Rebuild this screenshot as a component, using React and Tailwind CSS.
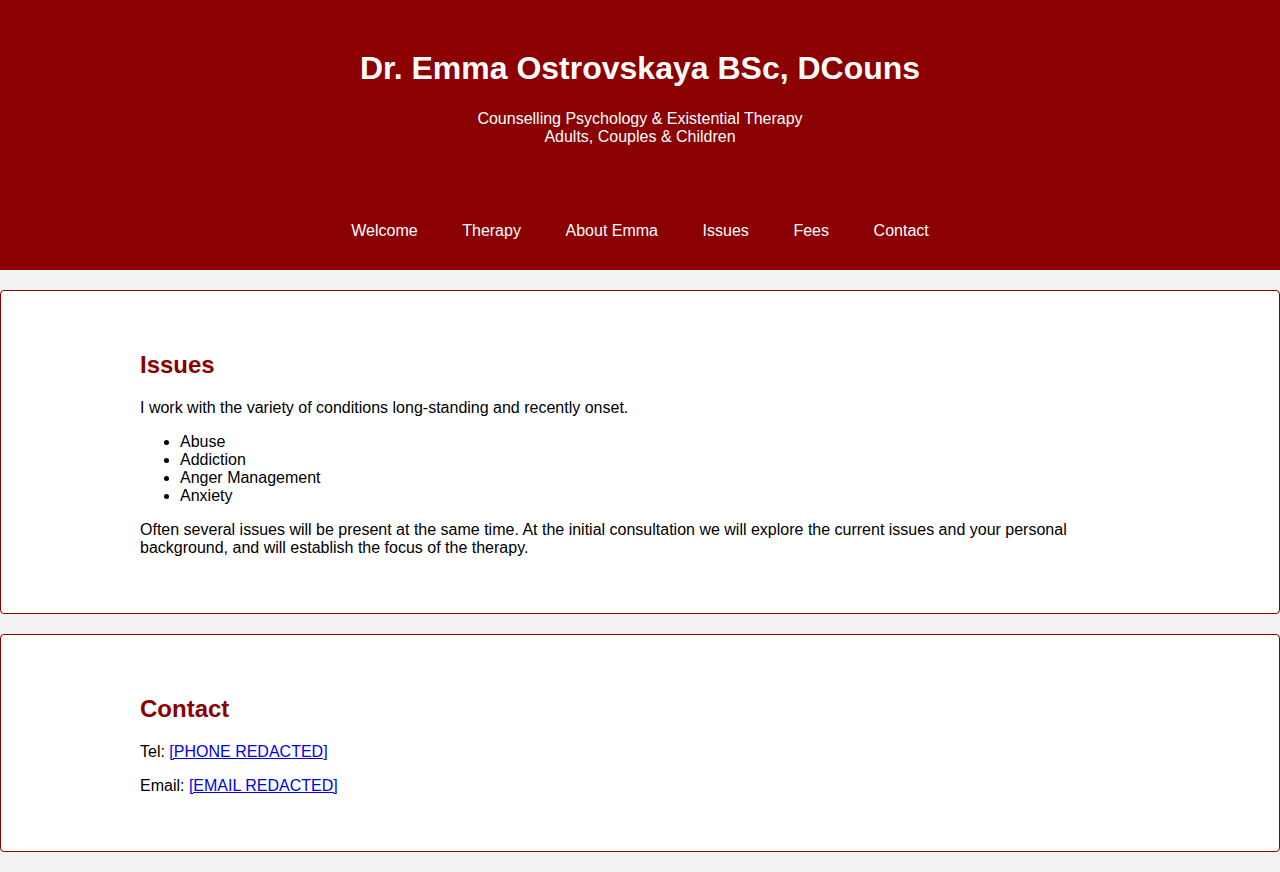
const navItems = ['Welcome', 'Therapy', 'About Emma', 'Issues', 'Fees', 'Contact']

const issues = ['Abuse', 'Addiction', 'Anger Management', 'Anxiety']

function Card({ title, children }) {
  return (
    <section className="mt-[20px] bg-white border border-[#8b0000] rounded-[4px] py-[40px]">
      <div className="w-[1000px] ml-[139px]">
        <h2 className="text-[24px] font-bold text-[#8b0000] leading-[normal] mt-[20px] mb-[20px]">{title}</h2>
        {children}
      </div>
      <div className="h-[16px]" />
    </section>
  )
}

export default function App() {
  return (
    <div className="min-h-[872px] bg-[#f3f3f3] pb-[20px] text-[16px] leading-[normal] text-black font-['Liberation_Sans',Arial,sans-serif]">
      <header className="bg-[#8b0000] text-white text-center pt-[50px] pb-[10px]">
        <h1 className="text-[32px] font-bold leading-[normal] mb-[23px]">Dr. Emma Ostrovskaya BSc, DCouns</h1>
        <p>
          Counselling Psychology &amp; Existential Therapy
          <br />
          Adults, Couples &amp; Children
        </p>
        <nav className="mt-[56px] py-[20px] flex justify-center gap-[44.6px]">
          {navItems.map((item) => (
            <a key={item} href="#" className="text-white">
              {item}
            </a>
          ))}
        </nav>
      </header>

      <Card title="Issues">
        <p className="mb-[16px]">I work with the variety of conditions long-standing and recently onset.</p>
        <ul className="list-disc pl-[40px] mb-[16px]">
          {issues.map((i) => (
            <li key={i}>{i}</li>
          ))}
        </ul>
        <p>
          Often several issues will be present at the same time. At the initial consultation we will explore the current
          issues and your personal background, and will establish the focus of the therapy.
        </p>
      </Card>

      <Card title="Contact">
        <p className="mb-[16px]">
          Tel: <a href="#" className="text-[#0000ee] underline">[PHONE REDACTED]</a>
        </p>
        <p>
          Email: <a href="#" className="text-[#0000ee] underline">[EMAIL REDACTED]</a>
        </p>
      </Card>
    </div>
  )
}
